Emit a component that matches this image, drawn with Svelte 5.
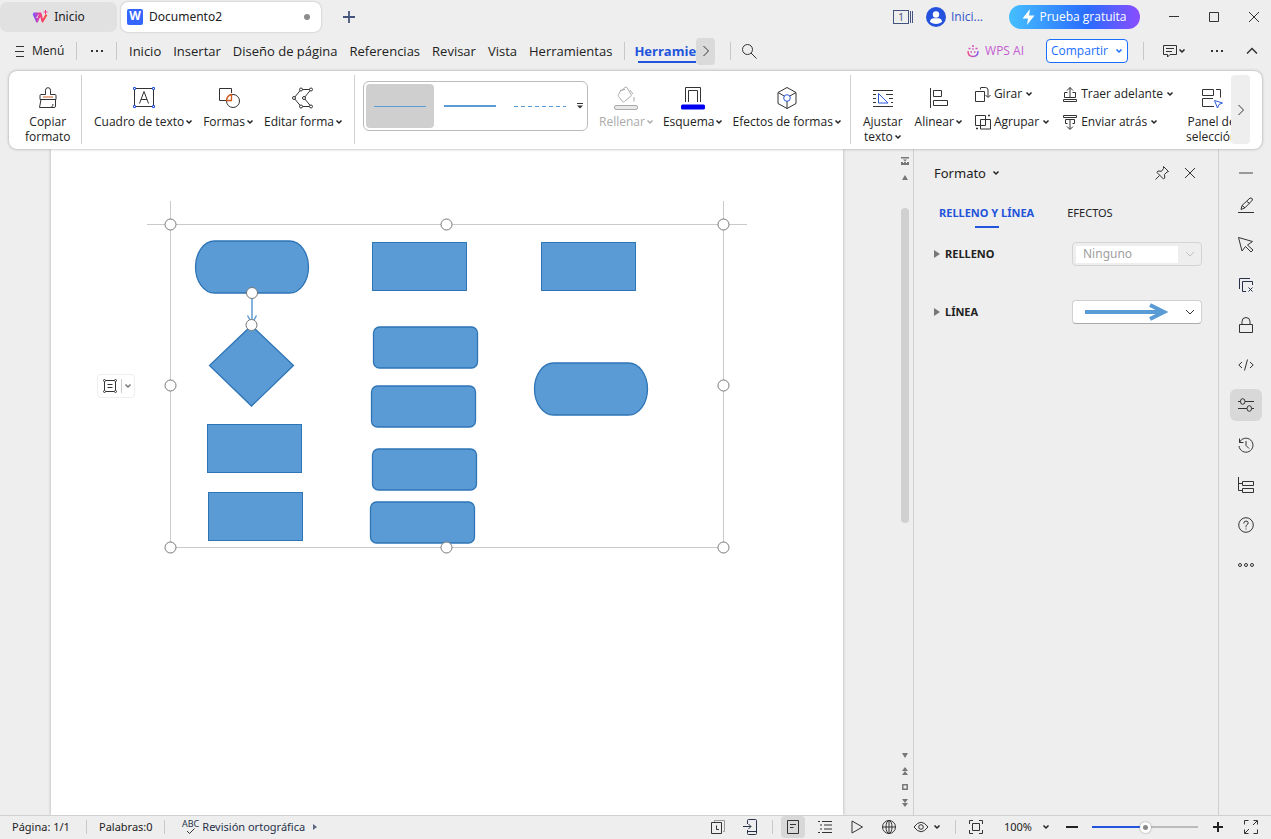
<script lang="ts">
    const icons: Record<string, string> = {
        brush: '<path d="M9.500 8.500V4.200a2.500 2.500 0 0 1 5 0V8.500H19a1 1 0 0 1 1 1v4H4v-4a1 1 0 0 1 1-1zM5 13.500l-1.500 8H18q1.500 0 1.500-1.500v-6.500M15.500 21q1.500-1 1.500-3"/><path d="M7 11h10" stroke="#d05a1e"/>',
        textbox: '<path d="M4 2.500h16M4 20.500h16M2.500 4v15M21.500 4v15M7.500 17.500L12 5.500l4.500 12M9 13.500h6"/><path stroke="#2b59d9" fill="#fff" d="M1.500 1.500h2v2h-2zM20.500 1.500h2v2h-2zM1.500 19.500h2v2h-2zM20.500 19.500h2v2h-2z"/>',
        shapes: '<path d="M9 14.500H2.500v-12h12V7"/><circle cx="16" cy="15" r="6.500"/><path d="M9.500 14.500q.5-5 5-6v6z" fill="#fff" stroke="#d05a1e" stroke-width="1.300"/>',
        nodes: '<path d="M20 3.500H10L3 12l7 8.500h10L13 12z"/><g fill="#fff"><circle cx="20" cy="3.500" r="1.500"/><circle cx="10" cy="3.500" r="1.500"/><circle cx="3" cy="12" r="1.500"/><circle cx="10" cy="20.500" r="1.500"/><circle cx="20" cy="20.500" r="1.500"/><circle cx="13" cy="12" r="1.500"/></g>',
        bucket: '<path d="M7 4L4.500 8.500q-.5 1 0 2l4 5q1 1 2 0l7-6L13 1.500q-1-.8-2 0L7 5M6 4.500l5-1M20 11v4.500M16 4l3 4"/><rect x=".5" y="19.500" width="23" height="4" rx="1.500" fill="#e8e8e8"/>',
        outline: '<path d="M4.500 16V1.500h15V16M7.500 16V4.500h9V16"/><rect x="0" y="18.500" width="24" height="5" rx="1.500" fill="#0000f0" stroke="none"/>',
        cube: '<path d="M12 1.500l9 5v11l-9 5-9-5v-11zM3 6.500l6.500 3.700M21 6.500l-6.500 3.700M12 15v7.500"/><circle cx="12" cy="12" r="3.300" stroke="#2b59d9"/>',
        wrap: '<path d="M2 4.500h20M2 8.500h3M15 8.500h7M2 12.500h3M18 12.500h4M2 16.500h3M20 16.500h2M2 20.500h20"/><path stroke="#2b59d9" d="M7.500 7.500v9.500H17z"/>',
        align: '<path d="M3.500 2v20M6.500 4.500h8v6h-8zM6.500 14.500h14v5h-14z"/>',
        rotate: '<path d="M.5 5.500h9v10h-9zM5.500 3.500v-1.500q0-.5.500-.5h4.500q2.500 0 2.500 2.500v7M10.500 9l2.500 2.500L15.500 9"/>',
        group: '<path d="M.5 1.500h10v10h-10zM5.500 5.500h10v9.500h-10z"/><path d="M13 1.500h2M1 14.500h2" stroke-width="1.500"/>',
        forward: '<path d="M8 11V1.500M5 4.500l3-3 3 3M5.500 6.500h-3v5h11v-5h-3M1.500 13.500h13v2h-13z"/>',
        backward: '<path d="M1.500 1.500h13v2h-13zM5.500 9.500h-2v-4h9v4h-2M8 6v9M5 12.500l3 3 3-3"/>',
        panel: '<path d="M2.500 3.500h11v6h-11zM16 3.500h4.500v8M14 20.500H2.500v-8H13"/><path stroke="#2b59d9" d="M14.500 14.500l8 2.500-3.500 1.500-1.500 3.500z"/>',
        search: '<circle cx="6.500" cy="6.500" r="5"/><path d="M10 10l5.500 5.500"/>',
        comment: '<path d="M1.500 2.500h13v9H8l-2.500 2.500V11.500h-4zM4 5.500h8M4 8.500h6"/>',
        pin: '<path d="M9.500 1.500l5 5-1.500.5-2.500 2.500.3 3.500-1.300 1L3 7.500 4 6l3.500.3L9.500 3.500zM5.500 10.500l-4 4"/>',
        close: '<path d="M3 3l10 10M13 3L3 13"/>',
        pen: '<path d="M0 15.500h16M3 12.500l1-4 8-7.500q2.500-.5 2.500 2L7 10.800zM4 8.500l3 2.300M9 4.500l2.500 2"/>',
        cursor: '<path d="M.5.500l14 4-5 3.500 5.500 5-2 2-5.500-5.500L4 14z"/>',
        layers: '<g stroke="#27324a"><path d="M1.500 12V1.500H12M8 14.500H4.500v-10h10V8M10.500 10.500l4 4M14.500 10.500l-4 4"/></g>',
        lock: '<path d="M1.500 7.500h13v8h-13zM4 7.500V4.500q0-4 4-4t4 4v3"/>',
        code: '<path d="M4 5L.8 8 4 11M12 5l3.200 3L12 11M9.500 2.500l-3 11"/>',
        sliders: '<path d="M0 4.500h2.500M7 4.500h9M0 11.500h9M13.500 11.500H16"/><ellipse cx="4.700" cy="4.500" rx="2.300" ry="2.800"/><ellipse cx="11.300" cy="11.500" rx="2.300" ry="2.800"/>',
        history: '<path d="M1.500 5.500A7 7 0 1 1 1 9M1.500 1.500v4h4M8 4v4.500l3 3"/>',
        tree: '<path d="M.5 0v13.500H4M.5 6.500H4M4.500 4.500h11v4h-11zM4.500 11.500h11v4h-11z"/>',
        help: '<circle cx="8" cy="8" r="7.300"/><path d="M5.800 6.500q0-2.500 2.200-2.500t2.200 2q0 1-1.200 1.700T8 9.500v.8M8 11.500v1"/>',
        more: '<circle cx="2" cy="8" r="1.500"/><circle cx="8" cy="8" r="1.500"/><circle cx="14" cy="8" r="1.500"/>',
        recent: '<path d="M4.500 3V1.500h10v11H13" stroke="#999"/><path d="M1.500 3.500h10v11h-10zM6.500 6.500v4H9"/>',
        phone: '<path stroke="#27324a" d="M5.500 5V1.500q0-1 1-1h7q1 0 1 1v13q0 1-1 1h-7q-1 0-1-1V11M1 7.500h8M6.500 5L9 7.500 6.500 10M6 12.500h8"/>',
        page: '<path d="M2.500 1.500h11v13h-11zM5 5.500h6M5 8.500h3.500"/>',
        list: '<path d="M1 2.500h2M5 2.500h10M3 6h2M7 6h8M3 10h2M7 10h8M1 13.500h2M5 13.500h10"/>',
        play: '<path d="M3 2l10.500 6L3 14z"/>',
        globe: '<circle cx="8" cy="8" r="6.500"/><ellipse cx="8" cy="8" rx="3" ry="6.500"/><path d="M1.500 8h13M8 1.500v13"/>',
        eye: '<path d="M1 8q7-9.500 14 0Q8 17.500 1 8z"/><circle cx="8" cy="8" r="2.300"/>',
        fit: '<path d="M1.500 5V1.500H5M11 1.500h3.500V5M14.500 11v3.500H11M5 14.500H1.500V11M4.500 4.500h7v7h-7z"/>',
        expand: '<path d="M1.500 5.500v-4h4M10.500 1.500h4v4M14.500 10.500v4h-4M5.500 14.500h-4v-4M14 2l-4 4M2 14l4-4"/>',
        layout: '<path d="M3.500 2.500h9M3.500 13.500h9M2.500 3.500v9M13.500 3.500v9M5.500 6.500h5M5.500 9.500h5"/><g fill="#fff"><circle cx="2.500" cy="2.500" r="1"/><circle cx="13.500" cy="2.500" r="1"/><circle cx="2.500" cy="13.500" r="1"/><circle cx="13.500" cy="13.500" r="1"/></g>'
    };

    const menuTabs = ['Inicio', 'Insertar', 'Diseño de página', 'Referencias', 'Revisar', 'Vista', 'Herramientas'];

    const shapeTools = [
        { icon: 'textbox', label: 'Cuadro de texto' },
        { icon: 'shapes', label: 'Formas' },
        { icon: 'nodes', label: 'Editar forma' }
    ];

    const styleTools = [
        { icon: 'bucket', label: 'Rellenar', disabled: true },
        { icon: 'outline', label: 'Esquema', disabled: false },
        { icon: 'cube', label: 'Efectos de formas', disabled: false }
    ];

    const railTools = [
        { icon: 'pen', label: 'Estilos' },
        { icon: 'cursor', label: 'Seleccionar' },
        { icon: 'layers', label: 'Capas' },
        { icon: 'lock', label: 'Proteger' },
        { icon: 'code', label: 'Código' },
        { icon: 'sliders', label: 'Formato' },
        { icon: 'history', label: 'Historial' },
        { icon: 'tree', label: 'Esquema' },
        { icon: 'help', label: 'Ayuda' },
        { icon: 'more', label: 'Más' }
    ];

    // flowchart shapes, in page coordinates
    const terminators = [{ x: 145, y: 92 }, { x: 484, y: 214 }];
    const processes = [{ x: 321, y: 93 }, { x: 490, y: 93 }, { x: 156, y: 275 }, { x: 157, y: 343 }];
    const rounded = [{ x: 322, y: 178 }, { x: 320, y: 237 }, { x: 321, y: 300 }, { x: 319, y: 353 }];
    const handles = [
        [119.5, 75.5], [395.5, 75.5], [672.5, 75.5],
        [119.5, 236.5], [672.5, 236.5],
        [119.5, 398.5], [395.5, 398.5], [672.5, 398.5],
        [201, 144], [200.5, 176]
    ];

    let activeRail = $state('sliders');
    let zoom = $state(50);
</script>

{#snippet icon(name: string, size = 16)}
    {@const box = size > 16 ? 24 : 16}
    <svg class="icon" width={size} height={size} viewBox="0 0 {box} {box}" aria-hidden="true">{@html icons[name]}</svg>
{/snippet}

{#snippet caret()}
    <svg class="caret" width="8" height="6" viewBox="0 0 8 6" aria-hidden="true"><path d="M1.500 1.500L4 4l2.500-2.500" /></svg>
{/snippet}

{#snippet chevron()}
    <svg class="chevron" width="12" height="8" viewBox="0 0 12 8" aria-hidden="true"><path d="M2 2l4 4 4-4" /></svg>
{/snippet}

<div class="app">
    <header class="titlebar">
        <button class="doc-tab home">
            <svg width="16" height="14" viewBox="0 0 16 14" aria-hidden="true">
                <defs>
                    <linearGradient id="brand"><stop stop-color="#7a4dff" /><stop offset=".5" stop-color="#f43a8d" /><stop offset="1" stop-color="#ff4b35" /></linearGradient>
                </defs>
                <path d="M1.500 3.500h4l-1.500 3M1.500 3.500l3.500 8 3.500-8 2 8 4-7M6 3.500h3" fill="none" stroke="url(#brand)" stroke-width="2" stroke-linejoin="round" />
                <path d="M13.500 0v4M11.500 2h4" stroke="#f43a8d" />
            </svg>
            Inicio
        </button>
        <button class="doc-tab current">
            <span class="doc-logo">W</span>
            <span class="doc-name">Documento2</span>
            <span class="unsaved"></span>
        </button>
        <button class="new-tab" aria-label="Nueva pestaña">
            <svg width="12" height="12" viewBox="0 0 12 12"><path d="M6 0v12M0 6h12" stroke="#44547c" stroke-width="1.800" /></svg>
        </button>
        <div class="title-actions">
            <button class="window-count" aria-label="Ventanas">
                <span class="count">1</span>
                <span class="stacked"></span>
            </button>
            <button class="account">
                <svg width="20" height="20" viewBox="0 0 20 20" aria-hidden="true">
                    <circle cx="10" cy="10" r="10" fill="#2452dc" />
                    <circle cx="10" cy="7.500" r="3.200" fill="#fff" />
                    <path d="M4 15q0-3.700 4-3.700h4q4 0 4 3.700-6 4-12 0z" fill="#fff" />
                </svg>
                Inici...
            </button>
            <button class="trial">
                <svg width="13" height="16" viewBox="0 0 13 16" aria-hidden="true"><path d="M8 0L.5 9.500H6L5 16l7.500-9.500H7z" fill="#fff" /></svg>
                Prueba gratuita
            </button>
            <button class="win-btn" aria-label="Minimizar"><svg class="icon" width="12" height="12"><path d="M1 5.500h10" /></svg></button>
            <button class="win-btn" aria-label="Maximizar"><svg class="icon" width="12" height="12"><path d="M1.500 1.500h9v9h-9z" /></svg></button>
            <button class="win-btn" aria-label="Cerrar"><svg class="icon" width="12" height="12"><path d="M1 1l10 10M11 1L1 11" /></svg></button>
        </div>
    </header>

    <nav class="menubar">
        <button class="menu-btn">
            <svg class="icon" width="10" height="12" aria-hidden="true"><path d="M1 1.500h8M0 6.500h9M1 11.500h8" /></svg>
            Menú
        </button>
        <span class="divider"></span>
        <button class="dots" aria-label="Más comandos"><i></i><i></i><i></i></button>
        <span class="divider"></span>
        <div class="menu-tabs">
            {#each menuTabs as tab (tab)}
                <button class="menu-tab">{tab}</button>
            {/each}
        </div>
        <span class="divider"></span>
        <div class="context-tab"><button class="menu-tab active">Herramientas</button></div>
        <button class="scroll-tabs" aria-label="Más pestañas">
            <svg class="icon" width="8" height="12"><path d="M1.500 1l5 5-5 5" /></svg>
        </button>
        <span class="divider"></span>
        <button class="search" aria-label="Buscar">{@render icon('search')}</button>
        <div class="menu-actions">
            <button class="ai">
                <svg width="12" height="13" viewBox="0 0 12 13" aria-hidden="true">
                    <defs><linearGradient id="ai"><stop stop-color="#f0508c" /><stop offset="1" stop-color="#8b5cf6" /></linearGradient></defs>
                    <path d="M1 6q0 5.500 5 5.500T11 6" fill="none" stroke="url(#ai)" stroke-width="1.500" />
                    <path d="M5 1h2M1.500 3.500h2M8.500 3.500h2M3.500 7h1.500M7 7h1.500M5.200 4h1.500" stroke="#d052b4" stroke-width="1.600" />
                </svg>
                WPS AI
            </button>
            <button class="share">Compartir {@render caret()}</button>
            <span class="divider"></span>
            <button class="comments" aria-label="Comentarios">{@render icon('comment')}{@render caret()}</button>
            <button class="dots" aria-label="Más opciones"><i></i><i></i><i></i></button>
            <button class="collapse" aria-label="Contraer"><svg class="icon" width="12" height="8"><path d="M1 6.500l5-5 5 5" stroke-width="1.500" /></svg></button>
        </div>
    </nav>

    <section class="ribbon" aria-label="Herramientas">
        <div class="group painter">
            <button class="tool">{@render icon('brush', 24)}<span>Copiar<br />formato</span></button>
        </div>
        <div class="group shapes">
            {#each shapeTools as tool (tool.label)}
                <button class="tool">{@render icon(tool.icon, 24)}<span>{tool.label}{@render caret()}</span></button>
            {/each}
        </div>
        <div class="group styles">
            <div class="gallery">
                <button class="sample selected" aria-label="Línea fina"><svg width="52" height="4"><path d="M0 2.500h52" stroke="#5b9bd5" /></svg></button>
                <button class="sample" aria-label="Línea gruesa"><svg width="52" height="4"><path d="M0 2h52" stroke="#5b9bd5" stroke-width="2" /></svg></button>
                <button class="sample" aria-label="Línea discontinua"><svg width="52" height="4"><path d="M0 2.500h52" stroke="#5b9bd5" stroke-dasharray="4 3" /></svg></button>
                <button class="gallery-more" aria-label="Más estilos">
                    <svg width="6" height="6"><path d="M0 .5h6" stroke="#333" /><path d="M0 2.500h6L3 5.500z" fill="#333" /></svg>
                </button>
            </div>
            {#each styleTools as tool (tool.label)}
                <button class="tool" disabled={tool.disabled}>{@render icon(tool.icon, 24)}<span>{tool.label}{@render caret()}</span></button>
            {/each}
        </div>
        <div class="group arrange">
            <button class="tool">{@render icon('wrap', 24)}<span>Ajustar<br />texto{@render caret()}</span></button>
            <button class="tool">{@render icon('align', 24)}<span>Alinear{@render caret()}</span></button>
            <div class="stack">
                <button class="row-tool">{@render icon('rotate')}<span>Girar</span>{@render caret()}</button>
                <button class="row-tool">{@render icon('group')}<span>Agrupar</span>{@render caret()}</button>
            </div>
            <div class="stack">
                <button class="row-tool">{@render icon('forward')}<span>Traer adelante</span>{@render caret()}</button>
                <button class="row-tool">{@render icon('backward')}<span>Enviar atrás</span>{@render caret()}</button>
            </div>
            <button class="tool">{@render icon('panel', 24)}<span>Panel de<br />selección</span></button>
        </div>
        <button class="scroll-ribbon" aria-label="Más herramientas">
            <svg class="icon" width="8" height="12"><path d="M1.500 1l5 5-5 5" /></svg>
        </button>
    </section>

    <main class="workspace">
        <div class="viewport">
            <article class="sheet">
                <svg class="canvas" width="792" height="420" viewBox="0 0 792 420" role="img" aria-label="Diagrama de flujo">
                    <path class="frame" d="M96 75.500h600M119.500 52v346.500h553V52" />
                    <g class="shape">
                        {#each processes as p}
                            <rect x={p.x + 0.5} y={p.y + 0.5} width="94" height="48" />
                        {/each}
                        <g class="soft">
                            {#each terminators as t}
                                <rect x={t.x - 0.5} y={t.y} width="113" height="52" rx="19" ry="26" />
                            {/each}
                            {#each rounded as r}
                                <rect x={r.x + 0.5} y={r.y} width="104" height="41" rx="6" />
                            {/each}
                            <path d="M200.500 176.500L242.500 216.500l-42 40.500-42-40.500z" />
                        </g>
                    </g>
                    <path class="connector" d="M201 146v28M196.500 166.500l4.500 8 4.500-8" />
                    {#each handles as [cx, cy]}
                        <circle class="handle" {cx} {cy} r="5.500" />
                    {/each}
                </svg>
                <div class="layout-options">
                    <button aria-label="Opciones de diseño">{@render icon('layout')}</button>
                    <button class="drop" aria-label="Más opciones de diseño">{@render caret()}</button>
                </div>
            </article>
        </div>

        <div class="scrollbar">
            <button aria-label="Mostrar regla"><svg width="8" height="8"><path d="M0 0h8v1.500H0zM2 2.500h4L4 4.500zM0 5h2v1h1V5h2v1h1V5h2v3H0z" /></svg></button>
            <button aria-label="Subir"><svg width="6" height="5"><path d="M3 0l3 5H0z" /></svg></button>
            <div class="track"><div class="thumb"></div></div>
            <button aria-label="Bajar"><svg width="6" height="5"><path d="M0 0h6L3 5z" /></svg></button>
            <button aria-label="Página anterior"><svg width="6" height="8"><path d="M3 0l3 4H0zM3 4l3 4H0z" /></svg></button>
            <button aria-label="Buscar objeto"><svg width="6" height="6"><path d="M.8.8h4.400v4.400H.8z" fill="none" stroke="#777" stroke-width="1.500" /></svg></button>
            <button aria-label="Página siguiente"><svg width="6" height="8"><path d="M0 0h6L3 4zM0 4h6L3 8z" /></svg></button>
        </div>

        <aside class="format">
            <header class="format-head">
                <button class="format-title">Formato {@render caret()}</button>
                <button aria-label="Fijar">{@render icon('pin')}</button>
                <button aria-label="Cerrar panel">{@render icon('close')}</button>
            </header>
            <div class="format-tabs">
                <button class="active">RELLENO Y LÍNEA</button>
                <button>EFECTOS</button>
            </div>
            <div class="field">
                <span class="marker"></span>
                <label for="fill">RELLENO</label>
                <div class="picker disabled">
                    <select id="fill" disabled><option>Ninguno</option></select>
                    {@render chevron()}
                </div>
            </div>
            <div class="field">
                <span class="marker"></span>
                <label for="line">LÍNEA</label>
                <button id="line" class="picker">
                    <svg width="86" height="18" viewBox="0 0 86 18" aria-hidden="true"><path d="M1 9h79M66 2l14 7-14 7" fill="none" stroke="#5b9bd5" stroke-width="4" /></svg>
                    {@render chevron()}
                </button>
            </div>
        </aside>

        <div class="rail">
            <button class="rail-min" aria-label="Contraer barra"><span></span></button>
            {#each railTools as tool (tool.icon)}
                <button class="rail-btn" class:active={activeRail === tool.icon} aria-label={tool.label} onclick={() => (activeRail = tool.icon)}>
                    {@render icon(tool.icon)}
                </button>
            {/each}
        </div>
    </main>

    <footer class="status">
        <span class="page-count">Página: 1/1</span>
        <span class="divider"></span>
        <span class="word-count">Palabras:0</span>
        <span class="divider"></span>
        <button class="proofing">
            <span class="abc">ABC<svg class="icon" width="10" height="7" aria-hidden="true"><path d="M1 3l2.500 2.500L8.500.5" /></svg></span>
            Revisión ortográfica
            <svg class="play-mark" width="4" height="6" aria-hidden="true"><path d="M0 0l4 3-4 3z" fill="#5c6680" /></svg>
        </button>
        <div class="status-tools">
            <button aria-label="Historial de versiones">{@render icon('recent')}</button>
            <button aria-label="Enviar al móvil">{@render icon('phone')}</button>
            <span class="divider"></span>
            <button class="view active" aria-label="Vista de página">{@render icon('page')}</button>
            <button aria-label="Vista de esquema">{@render icon('list')}</button>
            <button aria-label="Reproducir">{@render icon('play')}</button>
            <button aria-label="Vista web">{@render icon('globe')}</button>
            <button class="eye" aria-label="Modo de lectura">{@render icon('eye')}{@render caret()}</button>
            <span class="divider"></span>
            <button aria-label="Ajustar página">{@render icon('fit')}</button>
            <button class="percent">100% {@render caret()}</button>
            <button aria-label="Alejar"><svg width="12" height="12"><path d="M0 6h12" stroke="#222" stroke-width="2" /></svg></button>
            <input type="range" min="0" max="100" bind:value={zoom} aria-label="Zoom" style:--fill="{zoom}%" />
            <button aria-label="Acercar"><svg width="12" height="12"><path d="M1 6h10M6 1v10" stroke="#222" stroke-width="2" /></svg></button>
            <button class="full" aria-label="Pantalla completa">{@render icon('expand')}</button>
        </div>
    </footer>
</div>

<style>
    :global(body) {
        margin: 0;
        background: #eeeeee;
    }

    .app {
        --line: #d0d0d0;
        --blue: #2254dc;
        display: flex;
        flex-direction: column;
        min-height: 100vh;
        overflow: hidden;
        color: #222;
        font-family: "Noto Sans", "Open Sans", sans-serif;
        font-size: 12px;
        line-height: 16px;
    }

    button {
        display: flex;
        align-items: center;
        justify-content: center;
        flex: none;
        margin: 0;
        padding: 0;
        border: 0;
        background: none;
        color: inherit;
        font: inherit;
        white-space: nowrap;
    }

    svg {
        display: block;
        flex: none;
    }

    .icon,
    .caret,
    .chevron {
        fill: none;
        stroke: #333;
    }

    .caret {
        stroke: currentColor;
        stroke-width: 1.5;
    }

    .divider {
        flex: none;
        width: 1px;
        height: 18px;
        background: #c8c8c8;
    }

    /* title bar */
    .titlebar {
        display: flex;
        align-items: center;
        height: 34px;
    }

    .doc-tab {
        height: 30px;
        border-radius: 7px;
    }

    .home {
        width: 117px;
        margin-right: 4px;
        gap: 6px;
        background: #e1e1e1;
    }

    .current {
        width: 200px;
        justify-content: flex-start;
        box-sizing: border-box;
        padding: 0 11px 0 6px;
        background: #fff;
        box-shadow: 0 0 2px #aaa;
    }

    .doc-logo {
        width: 16px;
        height: 16px;
        border-radius: 2px;
        background: #3566ff;
        color: #fff;
        font-weight: 700;
        line-height: 14px;
    }

    .doc-name {
        flex: 1;
        margin-left: 6px;
        text-align: left;
    }

    .unsaved {
        width: 6px;
        height: 6px;
        border-radius: 50%;
        background: #8c8c8c;
    }

    .new-tab {
        width: 32px;
        margin-left: 12px;
        height: 30px;
    }

    .title-actions {
        display: flex;
        align-items: center;
        margin-left: auto;
        height: 32px;
    }

    .window-count {
        margin-right: 13px;
        color: #44547c;
        font-size: 10px;
    }

    .count {
        width: 14px;
        height: 12px;
        border: 1px solid #44547c;
        line-height: 12px;
    }

    .stacked {
        width: 1px;
        height: 12px;
        margin-left: 1px;
        border: 1px solid #44547c;
        border-width: 0 1px;
    }

    .account {
        gap: 5px;
        width: 56px;
        margin-right: 27px;
        justify-content: flex-start;
        color: #2f55c8;
        font-family: "Open Sans", sans-serif;
    }

    .trial {
        gap: 4px;
        width: 131px;
        height: 24px;
        margin-right: 14px;
        border-radius: 12px;
        background: linear-gradient(90deg, #45bfff, #2a6cff 60%, #8a4dff);
        color: #fff;
        font-family: "Open Sans", sans-serif;
    }

    .win-btn {
        width: 40px;
        height: 32px;
    }

    .win-btn:last-child {
        margin-right: -3px;
    }

    /* menu bar */
    .menubar {
        display: flex;
        align-items: center;
        height: 34px;
        padding: 0 13px 3px 15px;
        font-family: "Open Sans", "Noto Sans", sans-serif;
    }

    .menu-btn {
        gap: 7px;
        width: 48px;
        margin-right: 13px;
        justify-content: flex-start;
    }

    .dots {
        gap: 3px;
        width: 39px;
        height: 20px;
    }

    .dots i {
        width: 2px;
        height: 2px;
        background: #333;
    }

    .menu-tabs {
        display: flex;
        gap: 12px;
        margin: 0 12px;
    }

    .menu-tab {
        height: 24px;
        font-size: 13px;
    }

    .context-tab {
        width: 62px;
        margin-left: 9px;
        overflow: hidden;
    }

    .menu-tab.active {
        position: relative;
        color: var(--blue);
        font-weight: 700;
    }

    .menu-tab.active::after {
        position: absolute;
        right: 0;
        bottom: 0;
        left: 4px;
        height: 2px;
        background: var(--blue);
        content: '';
    }

    .scroll-tabs {
        width: 19px;
        height: 27px;
        margin-right: 15px;
        border-radius: 4px;
        background: #dadada;
    }

    .search {
        margin-left: 10px;
    }

    .menu-actions {
        display: flex;
        align-items: center;
        margin-left: auto;
    }

    .ai {
        gap: 6px;
        margin-right: 22px;
        color: #c45cd0;
    }

    .share {
        gap: 7px;
        box-sizing: border-box;
        width: 82px;
        height: 24px;
        margin-right: 15px;
        border: 1px solid #1a6dff;
        border-radius: 4px;
        background: #fff;
        color: #1a6dff;
    }

    .comments {
        margin: 0 11px 0 18px;
    }

    .collapse {
        margin-left: 10px;
    }

    /* ribbon */
    .ribbon {
        position: relative;
        z-index: 1;
        display: flex;
        height: 78px;
        margin: 0 9px;
        overflow: hidden;
        border-radius: 8px;
        background: #fff;
        box-shadow: 0 0 3px #999;
        font-family: "Open Sans", "Noto Sans", sans-serif;
    }

    .group {
        display: flex;
        flex: none;
        align-items: flex-start;
        box-sizing: border-box;
        height: 69px;
        margin-top: 4px;
        padding-top: 11px;
        border-right: 1px solid var(--line);
    }

    .painter {
        width: 73px;
        padding-left: 16px;
    }

    .shapes {
        gap: 10px;
        width: 273px;
        padding-left: 12px;
    }

    .styles {
        gap: 9px;
        width: 496px;
        padding-left: 8px;
    }

    .arrange {
        flex: 1 1 0;
        min-width: 0;
        gap: 12px;
        overflow: hidden;
        padding-left: 12px;
        border: 0;
    }

    .tool {
        flex-direction: column;
        gap: 4px;
    }

    .tool span {
        line-height: 15px;
    }

    .tool .caret {
        display: inline-block;
        margin-left: 1px;
        vertical-align: 1px;
    }

    .tool:disabled {
        color: #aaa;
    }

    .tool:disabled :global(.icon) {
        stroke: #aaa;
    }

    .gallery {
        display: flex;
        box-sizing: border-box;
        width: 225px;
        height: 50px;
        margin: -5px 2px 0 0;
        padding: 2px;
        border: 1px solid #bbb;
        border-radius: 6px;
    }

    .sample {
        width: 68px;
        height: 44px;
        margin-right: 2px;
        border-radius: 4px;
    }

    .sample.selected {
        background: #cfcfcf;
    }

    .gallery-more {
        width: 8px;
    }

    .stack {
        display: flex;
        flex-direction: column;
        gap: 12px;
    }

    .row-tool {
        gap: 3px;
        justify-content: flex-start;
    }

    .scroll-ribbon {
        width: 19px;
        height: 69px;
        margin: 4px 12px 0 0;
        border-radius: 4px;
        background: #eee;
    }

    /* workspace */
    .workspace {
        display: flex;
        flex: 1;
        min-height: 0;
    }

    .viewport {
        display: flex;
        flex: 1;
        justify-content: center;
        min-width: 0;
    }

    .sheet {
        position: relative;
        width: 792px;
        background: #fff;
        box-shadow: 0 0 3px #aaa;
    }

    .frame {
        fill: none;
        stroke: #cacaca;
    }

    .shape {
        fill: #5b9bd5;
        stroke: #2e75b6;
    }

    .soft {
        stroke-width: 1.3;
    }

    .connector {
        fill: none;
        stroke: #5b9bd5;
        stroke-width: 1.5;
    }

    .handle {
        fill: #fff;
        stroke: #777;
    }

    .layout-options {
        position: absolute;
        top: 225px;
        left: 46px;
        display: flex;
        align-items: center;
        width: 36px;
        height: 22px;
        border: 1px solid #eee;
        border-radius: 4px;
        background: #fff;
    }

    .layout-options button {
        flex: 1;
    }

    .layout-options .drop {
        flex: none;
        width: 13px;
        height: 14px;
        border-left: 1px solid #ccc;
        color: #777;
    }

    .scrollbar {
        display: flex;
        flex: none;
        flex-direction: column;
        align-items: center;
        box-sizing: border-box;
        width: 20px;
        padding: 4px 0 4px 2px;
        border-right: 1px solid var(--line);
        fill: #777;
    }

    .scrollbar button {
        width: 16px;
        height: 16px;
    }

    .track {
        flex: 1;
        width: 8px;
    }

    .thumb {
        height: 56%;
        margin-top: 23px;
        border-radius: 4px;
        background: #d0d0d0;
    }

    .format {
        flex: none;
        box-sizing: border-box;
        width: 305px;
        padding: 15px 16px 0 20px;
        border-right: 1px solid var(--line);
    }

    .format-head {
        display: flex;
        align-items: center;
        gap: 12px;
        height: 18px;
        padding-right: 4px;
    }

    .format-title {
        gap: 6px;
        margin-right: auto;
        font-size: 13px;
    }

    .format-tabs {
        display: flex;
        gap: 33px;
        margin: 20px 0 11px 5px;
    }

    .format-tabs button {
        position: relative;
        height: 22px;
        font-size: 11px;
    }

    .format-tabs button.active {
        color: var(--blue);
        font-weight: 700;
    }

    .format-tabs button.active::after {
        position: absolute;
        bottom: -4px;
        left: calc(50% - 12px);
        width: 24px;
        height: 2px;
        background: var(--blue);
        content: '';
    }

    .field {
        display: flex;
        align-items: center;
        height: 58px;
        margin-top: -10px;
        margin-bottom: 10px;
    }

    .marker {
        width: 0;
        border: 4px solid transparent;
        border-right: 0;
        border-left: 6px solid #777;
    }

    .field label {
        margin-left: 5px;
        font-size: 11px;
        font-weight: 700;
    }

    .picker {
        display: flex;
        align-items: center;
        justify-content: space-between;
        box-sizing: border-box;
        width: 130px;
        height: 24px;
        margin-left: auto;
        padding: 0 5px 0 11px;
        border: 1px solid var(--line);
        border-bottom-color: #aaa;
        border-radius: 4px;
        background: #fff;
    }

    .picker.disabled {
        padding-left: 3px;
        border-color: #d4d4d4;
        background: none;
    }

    .picker.disabled :global(.chevron) {
        stroke: #c0c0c0;
    }

    select {
        width: 102px;
        height: 17px;
        padding: 0 7px;
        border: 0;
        appearance: none;
        background: #fff;
        color: #a0a0a0;
        font: inherit;
        opacity: 1;
    }

    .rail {
        display: flex;
        flex: none;
        flex-direction: column;
        align-items: center;
        gap: 8px;
        box-sizing: border-box;
        width: 52px;
        padding: 16px 0 0 2px;
    }

    .rail-min {
        width: 32px;
        height: 16px;
    }

    .rail-min span {
        width: 14px;
        height: 2px;
        background: #999;
    }

    .rail-btn {
        width: 32px;
        height: 32px;
        border-radius: 6px;
    }

    .rail-btn.active {
        background: #d8d8d8;
    }

    /* status bar */
    .status {
        position: relative;
        z-index: 1;
        display: flex;
        align-items: center;
        box-sizing: border-box;
        height: 24px;
        padding: 0 12px 1px;
        border-top: 1px solid var(--line);
        background: #eee;
        font-size: 11px;
    }

    .status .divider {
        height: 14px;
    }

    .page-count {
        width: 74px;
    }

    .word-count {
        width: 65px;
        padding-left: 12px;
    }

    .proofing {
        gap: 3px;
        margin-left: 17px;
        color: #27324a;
    }

    .play-mark {
        margin-left: 5px;
    }

    .abc {
        display: flex;
        flex-direction: column;
        align-items: center;
        font-size: 9px;
        line-height: 8px;
    }

    .status-tools {
        display: flex;
        align-items: center;
        gap: 16px;
        margin-left: auto;
    }

    .status-tools .divider {
        margin: 0 -4px 0 -2px;
    }

    .view {
        width: 24px;
        height: 22px;
        margin: 0 -4px;
        border-radius: 4px;
    }

    .view.active {
        background: #d8d8d8;
    }

    .eye {
        gap: 4px;
    }

    .percent {
        gap: 10px;
        margin-left: 4px;
    }

    .full {
        margin-left: 3px;
    }

    input[type='range'] {
        width: 106px;
        height: 12px;
        margin: 0 -2px;
        appearance: none;
        background: linear-gradient(90deg, var(--blue) var(--fill), #bbb var(--fill)) center / 100% 2px no-repeat;
    }

    input[type='range']::-webkit-slider-thumb {
        box-sizing: border-box;
        width: 11px;
        height: 11px;
        border: 3px solid #fff;
        border-radius: 50%;
        appearance: none;
        background: #888;
        box-shadow: 0 0 2px #888;
    }
</style>
